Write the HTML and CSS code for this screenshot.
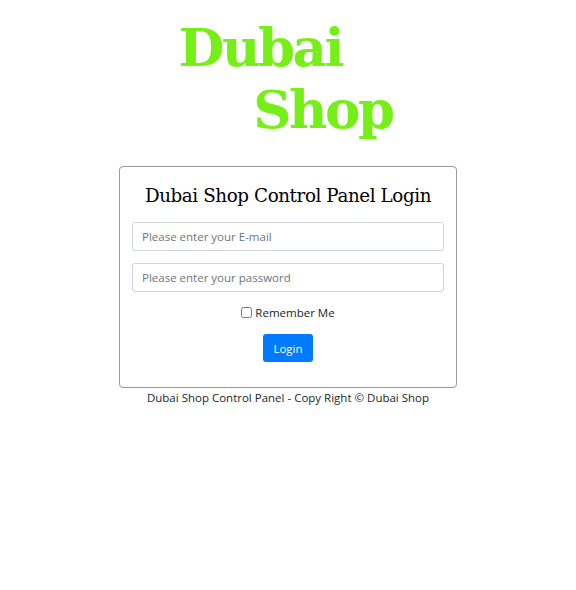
FILE: index.html
```html
<!DOCTYPE html>
<html>
<head>
<meta charset="utf-8">
<link rel="stylesheet" href="styles.css">
</head>
<body>
<div class="page">
  <h1 class="logo"><span class="l1">Dubai</span><span class="l2">Shop</span></h1>
  <div class="card">
    <h2 class="title">Dubai Shop Control Panel Login</h2>
    <input class="field" type="text" placeholder="Please enter your E-mail">
    <input class="field" type="password" placeholder="Please enter your password">
    <label class="remember"><input type="checkbox" class="check"> Remember Me</label>
    <button class="btn">Login</button>
  </div>
  <p class="footer">Dubai Shop Control Panel - Copy Right © Dubai Shop</p>
</div>
</body>
</html>
```
FILE: styles.css
```css
html, body { margin: 0; padding: 0; background: #fff; }
body { font-family: "Open Sans", "Noto Sans", sans-serif; color: #212529; }
.page { display: flex; flex-direction: column; align-items: center; padding-top: 16px; }
.logo {
  margin: 0; width: 209px; display: flex; flex-direction: column;
  font-family: "DejaVu Serif", serif; font-weight: bold; font-size: 53px; line-height: 62px;
  color: #76ee17; letter-spacing: -2.5px;
}
.l1 { align-self: flex-start; margin-left: -5px; }
.l2 { align-self: flex-end; }
.card {
  margin-top: 26px; width: 312px; padding: 16px 12px 25px;
  border: 1px solid #999; border-radius: 4px;
  display: flex; flex-direction: column; align-items: center;
}
.title { margin: 0 0 13px; font-family: "DejaVu Serif", serif; font-weight: normal; font-size: 18.3px; line-height: 26px; color: #000; letter-spacing: -0.4px; }
.field {
  box-sizing: border-box; width: 312px; height: 29px; margin-bottom: 12px;
  border: 1px solid #ced4da; border-radius: 3px; padding: 0 9px;
  font-family: inherit; font-size: 11.5px; color: #495057;
}
.field::placeholder { color: #6c757d; }
.remember { display: flex; align-items: center; gap: 3px; font-size: 11.5px; color: #212529; margin-top: 1px; }
.check { margin: 0; width: 11px; height: 11px; }
.btn {
  margin-top: 14px; height: 28px; padding: 0 10px; border: none; border-radius: 3px;
  background: #007bff; color: #fff; font-family: inherit; font-size: 11.5px;
}
.footer { margin: 2px 0 0; font-size: 11.5px; color: #212529; }
```
